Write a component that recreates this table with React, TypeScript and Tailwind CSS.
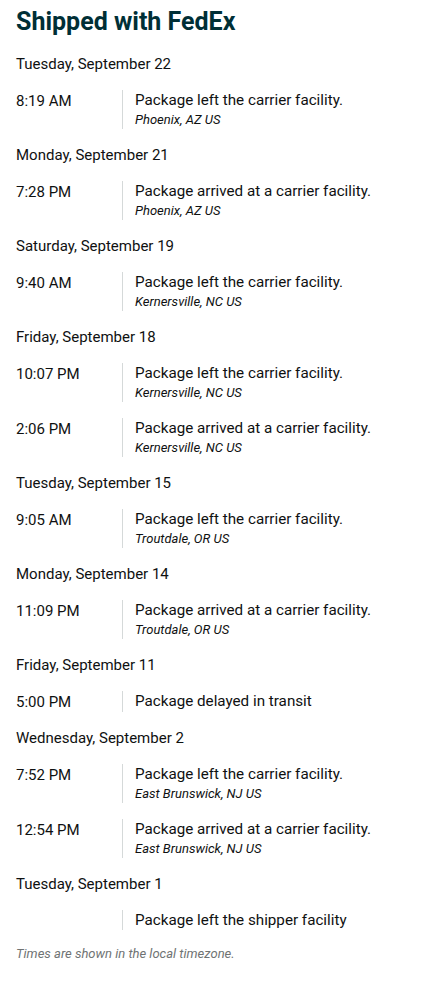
type TrackingEvent = {
  time: string
  message: string
  location?: string
}

type TrackingDay = {
  date: string
  events: TrackingEvent[]
}

// Riwayat pengiriman, urut dari yang terbaru
const days: TrackingDay[] = [
  {
    date: 'Tuesday, September 22',
    events: [{ time: '8:19 AM', message: 'Package left the carrier facility.', location: 'Phoenix, AZ US' }],
  },
  {
    date: 'Monday, September 21',
    events: [{ time: '7:28 PM', message: 'Package arrived at a carrier facility.', location: 'Phoenix, AZ US' }],
  },
  {
    date: 'Saturday, September 19',
    events: [{ time: '9:40 AM', message: 'Package left the carrier facility.', location: 'Kernersville, NC US' }],
  },
  {
    date: 'Friday, September 18',
    events: [
      { time: '10:07 PM', message: 'Package left the carrier facility.', location: 'Kernersville, NC US' },
      { time: '2:06 PM', message: 'Package arrived at a carrier facility.', location: 'Kernersville, NC US' },
    ],
  },
  {
    date: 'Tuesday, September 15',
    events: [{ time: '9:05 AM', message: 'Package left the carrier facility.', location: 'Troutdale, OR US' }],
  },
  {
    date: 'Monday, September 14',
    events: [{ time: '11:09 PM', message: 'Package arrived at a carrier facility.', location: 'Troutdale, OR US' }],
  },
  {
    date: 'Friday, September 11',
    events: [{ time: '5:00 PM', message: 'Package delayed in transit' }],
  },
  {
    date: 'Wednesday, September 2',
    events: [
      { time: '7:52 PM', message: 'Package left the carrier facility.', location: 'East Brunswick, NJ US' },
      { time: '12:54 PM', message: 'Package arrived at a carrier facility.', location: 'East Brunswick, NJ US' },
    ],
  },
  {
    date: 'Tuesday, September 1',
    events: [{ time: '', message: 'Package left the shipper facility' }],
  },
]

export default function App() {
  return (
    <main
      className="w-full min-h-screen bg-white px-4 pt-[6px] text-[#0f1111]"
      style={{ fontFamily: 'Roboto, "Liberation Sans", Arial, sans-serif' }}
    >
      <h1 className="text-[25px] font-bold leading-8 text-[#002f36]">Shipped with FedEx</h1>

      <div className="mt-[16px] flex flex-col">
        {days.map((day) => (
          <section key={day.date} className="flex flex-col">
            <h2 className="text-[15px] leading-5">{day.date}</h2>
            <div className="mt-[16px] flex flex-col">
              {day.events.map((ev, i) => (
                <EventRow key={i} event={ev} />
              ))}
            </div>
          </section>
        ))}
      </div>

      {/* Catatan zona waktu */}
      <p className="text-[13px] italic leading-4 text-[#6f7373]">Times are shown in the local timezone.</p>
    </main>
  )
}

// Satu baris event: jam di kiri, garis pemisah, pesan + lokasi di kanan
function EventRow({ event }: { event: TrackingEvent }) {
  return (
    <div className="flex mb-[16px]">
      <div className="w-[106px] shrink-0 text-[15px] leading-5 pt-[1px]">{event.time}</div>
      <div className="border-l border-[#d5d9d9] pl-3 flex flex-col">
        <span className="text-[15.2px] leading-5">{event.message}</span>
        {event.location && <span className="text-[13px] italic leading-[19px]">{event.location}</span>}
      </div>
    </div>
  )
}
